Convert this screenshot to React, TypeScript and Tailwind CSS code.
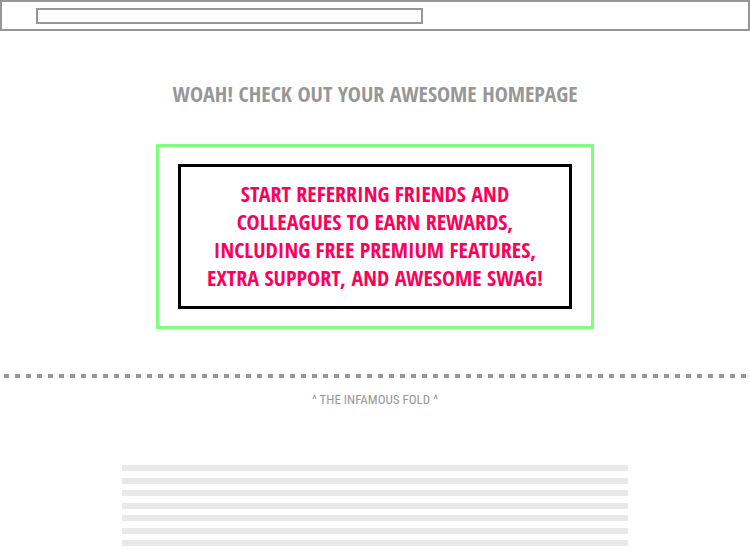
export default function App() {
  const lines = [0, 1, 2, 3, 4, 5, 6];
  return (
    <div className="min-h-screen overflow-hidden bg-white font-['Open_Sans_Condensed','Open_Sans',sans-serif] font-semibold uppercase">
      <header className="h-[31px] border-2 border-[#979797] pt-[6px] pr-[325px] pl-[34px]">
        <input aria-label="Address" className="block h-4 w-full border-2 border-[#979797] bg-white px-1" />
      </header>
      <main className="flex flex-col items-center">
        <h1 className="mt-12 text-[22px] leading-7 text-[#979797]">Woah! Check out your awesome homepage</h1>
        <section className="mt-[37px] w-full max-w-[438px] border-[3px] border-[#7eff7e] px-[19px] py-[17px]">
          <p className="border-[3px] border-black pt-3 pb-[15px] text-center text-[22px] leading-7 text-[#ff0058]">
            Start referring friends and<br />colleagues to earn rewards,<br />including free premium features,<br />extra support, and awesome swag!
          </p>
        </section>
      </main>
      <div className="mx-1 mt-[45px] h-1 bg-[repeating-linear-gradient(90deg,#979797_0_5px,transparent_5px_11px)]" />
      <p className="mt-3 text-center font-['Roboto_Condensed',sans-serif] text-[13px] leading-5 font-normal text-[#979797]">^ The infamous fold ^</p>
      <div className="mx-auto mt-[55px] flex h-[81px] w-full max-w-[506px] flex-col justify-between">
        {lines.map((line) => (
          <div key={line} className="h-1.5 bg-[#e9e9e9]" />
        ))}
      </div>
    </div>
  );
}
